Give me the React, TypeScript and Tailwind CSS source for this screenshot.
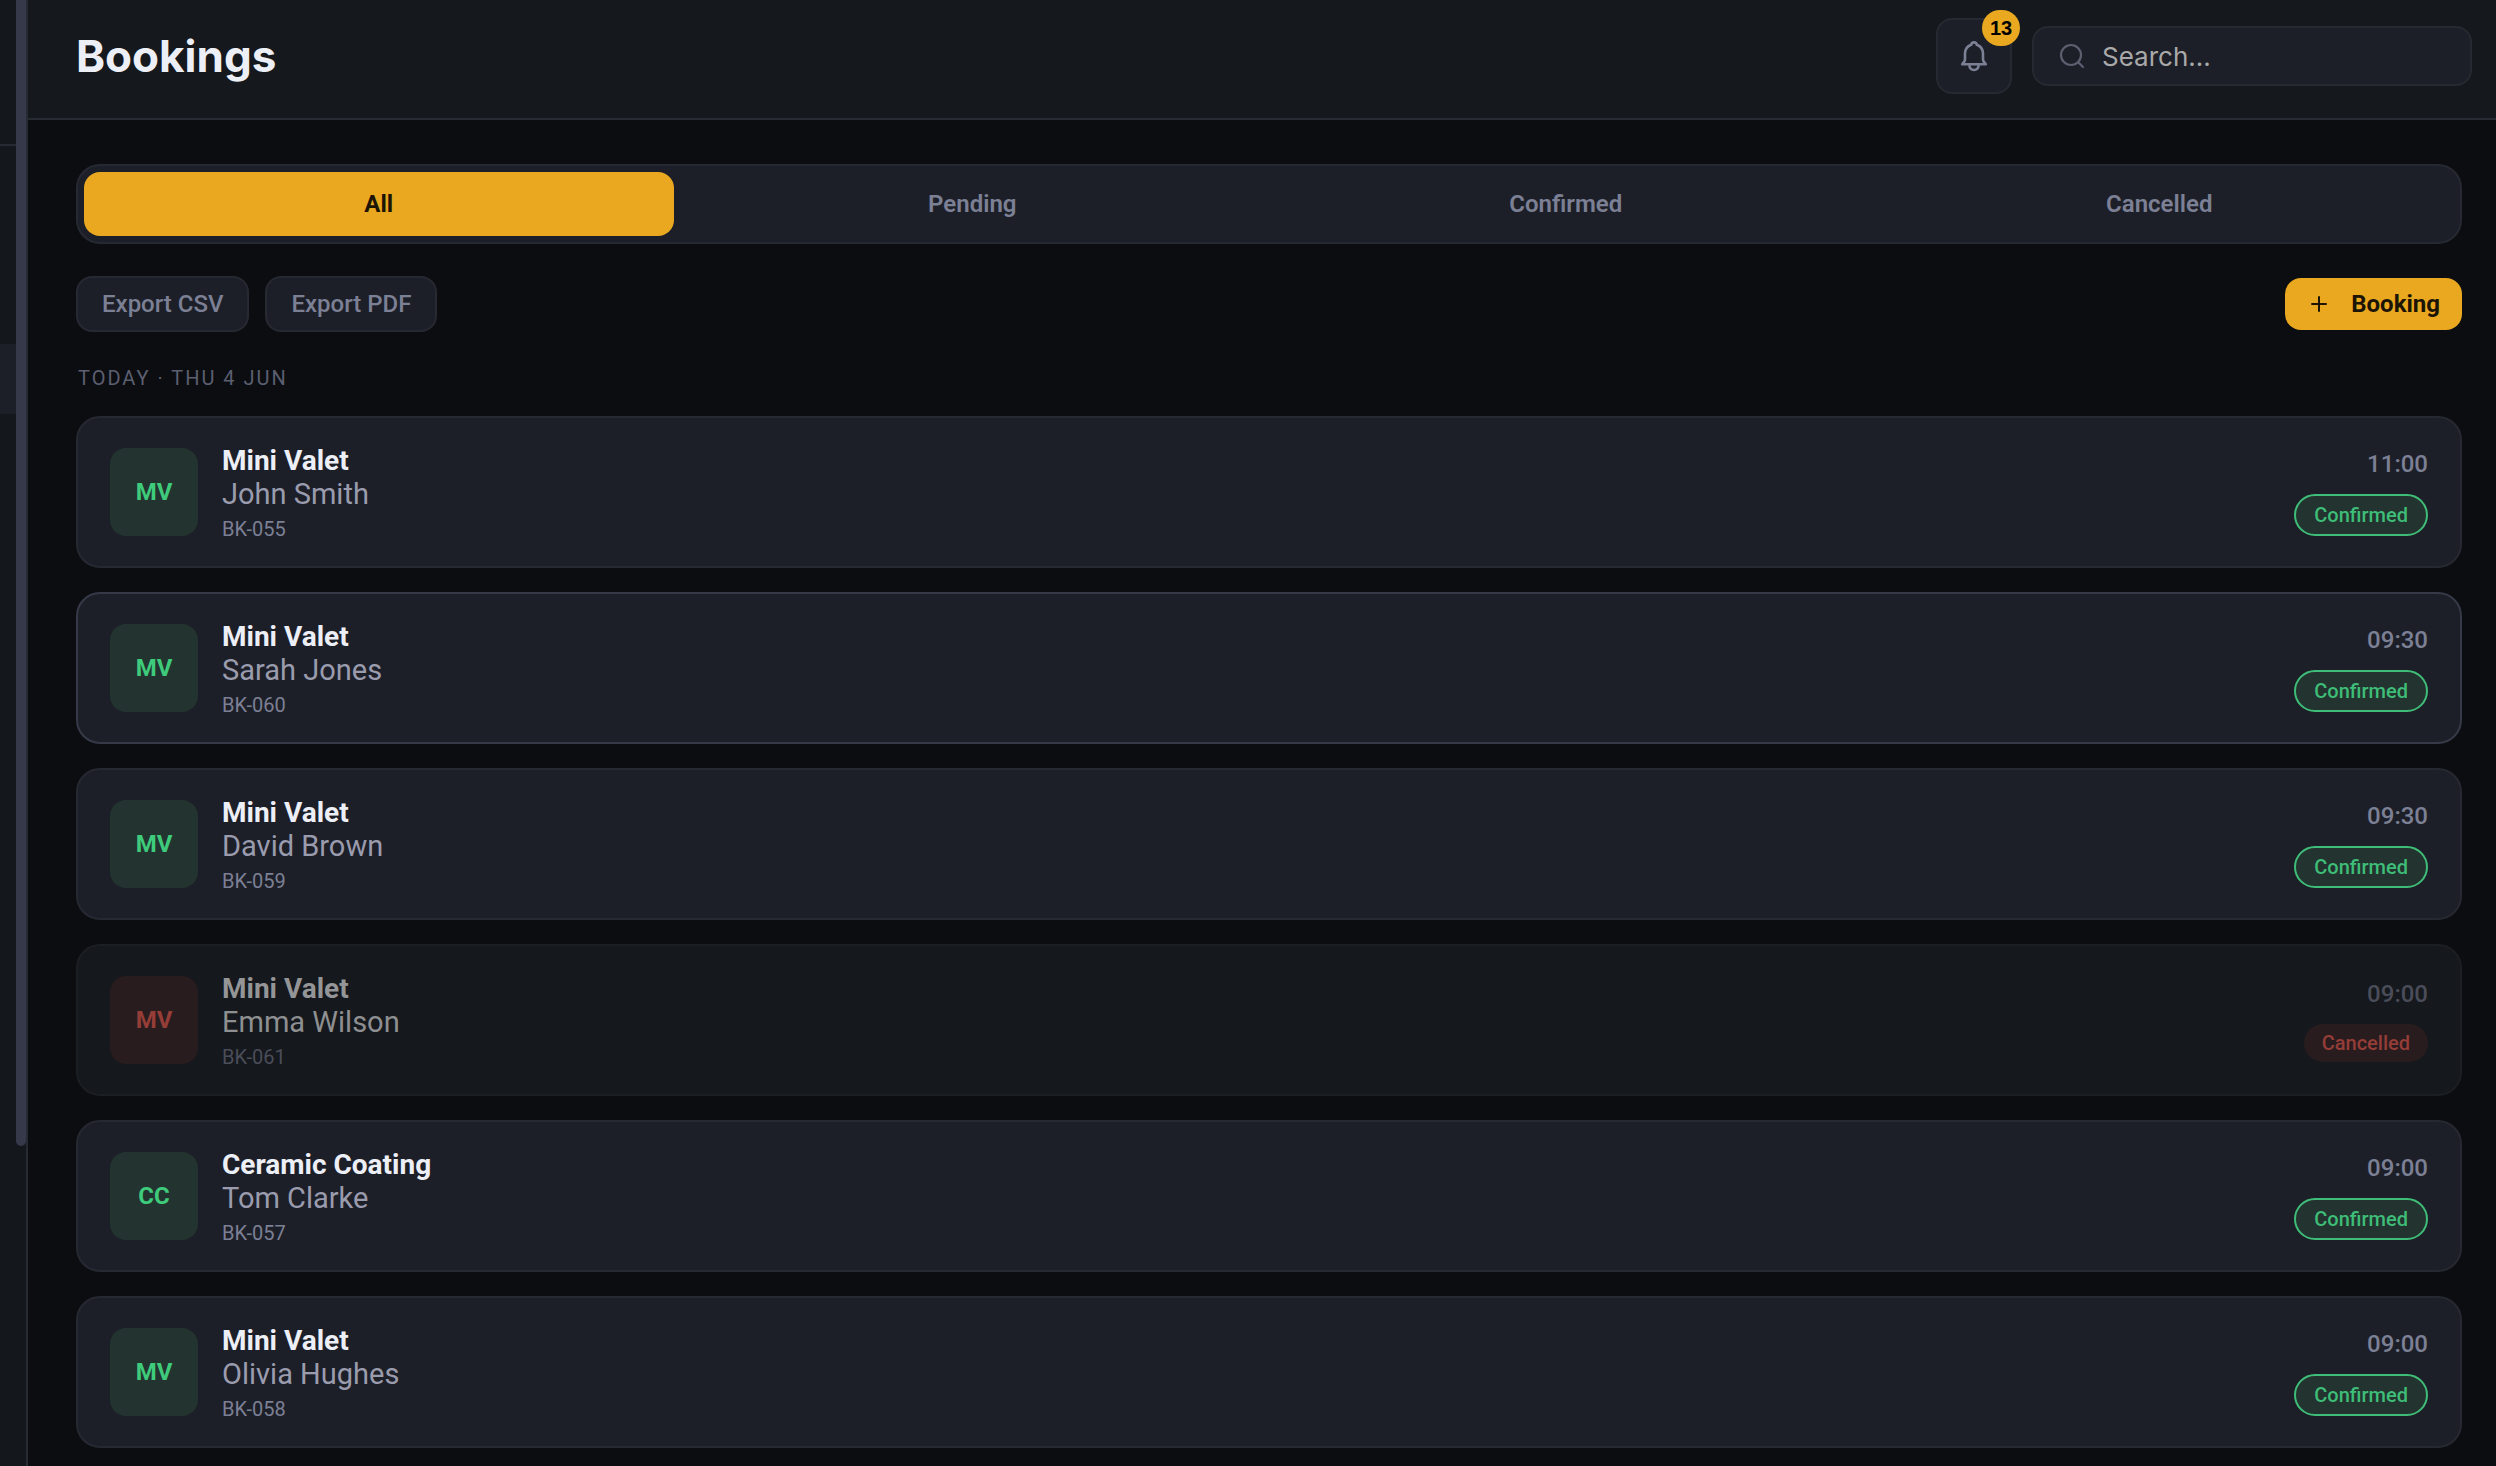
import { Plus } from "lucide-react";
import { clsx } from "clsx";

type Status = "Confirmed" | "Cancelled";

interface Booking {
  id: string;
  service: string;
  initials: string;
  customer: string;
  time: string;
  status: Status;
  highlighted?: boolean;
}

const tabs = ["All", "Pending", "Confirmed", "Cancelled"];

const bookings: Booking[] = [
  { id: "BK-055", service: "Mini Valet", initials: "MV", customer: "John Smith", time: "11:00", status: "Confirmed" },
  { id: "BK-060", service: "Mini Valet", initials: "MV", customer: "Sarah Jones", time: "09:30", status: "Confirmed", highlighted: true },
  { id: "BK-059", service: "Mini Valet", initials: "MV", customer: "David Brown", time: "09:30", status: "Confirmed" },
  { id: "BK-061", service: "Mini Valet", initials: "MV", customer: "Emma Wilson", time: "09:00", status: "Cancelled" },
  { id: "BK-057", service: "Ceramic Coating", initials: "CC", customer: "Tom Clarke", time: "09:00", status: "Confirmed" },
  { id: "BK-058", service: "Mini Valet", initials: "MV", customer: "Olivia Hughes", time: "09:00", status: "Confirmed" },
];

function BellIcon() {
  return (
    <svg viewBox="0 0 32 32" className="size-8" fill="none" stroke="currentColor" strokeWidth="2.6" strokeLinejoin="round" strokeLinecap="round" aria-hidden="true">
      <path d="M13.200 4.800C13.400 3.300 14.500 2.400 16 2.400s2.600.9 2.800 2.400c3.800 1.400 6.200 4.600 6.200 8.800v5.600c0 1.200.4 2 1 2.700l1.800 2.300H4.200L6 21.900c.6-.7 1-1.500 1-2.700v-5.600c0-4.200 2.400-7.400 6.200-8.800Z" />
      <path d="M11.400 25c0 3 1.900 5 4.600 5s4.600-2 4.600-5" />
    </svg>
  );
}

function SearchIcon() {
  return (
    <svg viewBox="0 0 28 28" className="size-7 shrink-0 text-[#5b5f70]" fill="none" stroke="currentColor" strokeWidth="2.2" strokeLinecap="round" aria-hidden="true">
      <circle cx="13" cy="13" r="10" />
      <path d="M20.500 20.500 25 25" />
    </svg>
  );
}

function BookingCard({ booking }: { booking: Booking }) {
  const cancelled = booking.status === "Cancelled";

  return (
    <article
      className={clsx(
        "flex items-center gap-6 rounded-3xl border-2 px-8 py-6",
        cancelled ? "border-[#1b1e23] bg-[#15181c]" : "bg-[#1d1f28]",
        !cancelled && (booking.highlighted ? "border-[#363a48]" : "border-[#262932]"),
      )}
    >
      <div
        className={clsx(
          "flex size-22 shrink-0 items-center justify-center rounded-2xl text-2xl font-bold",
          cancelled ? "bg-[#281c1f] text-[#953d37]" : "bg-[#23332f] text-[#3ecb7c]",
        )}
      >
        {booking.initials}
      </div>

      <div className="min-w-0 flex-1">
        <h2 className={clsx("text-[28px] leading-[38px] font-bold", cancelled ? "text-[#949597]" : "text-[#edeff6]")}>
          {booking.service}
        </h2>
        <p className={clsx("text-[29px] leading-7", cancelled ? "text-[#8e8f91]" : "text-[#9a9cae]")}>{booking.customer}</p>
        <p className={clsx("mt-2 text-xl leading-[26px]", cancelled ? "text-[#4a4d59]" : "text-[#7c8095]")}>{booking.id}</p>
      </div>

      <div className="flex flex-col items-end gap-3.5">
        <time className={clsx("text-2xl leading-8 font-medium", cancelled ? "text-[#4a4d59]" : "text-[#7c8095]")}>{booking.time}</time>
        <span
          className={clsx(
            "rounded-full px-[18px] text-xl leading-[38px] font-medium",
            cancelled ? "bg-[#281c1f] text-[#953d37]" : "border-2 border-[#3ebd78] bg-[#23332f] text-[#3ebd78]",
          )}
        >
          {booking.status}
        </span>
      </div>
    </article>
  );
}

function Sidebar() {
  return (
    <aside className="flex w-7 shrink-0 border-r-2 border-[#262a32] bg-[#14181c]">
      <nav className="w-4" aria-label="Main">
        <div className="h-[146px] border-b-2 border-[#262a32]" />
        <a href="#bookings" aria-label="Bookings" aria-current="page" className="mt-[198px] block h-[70px] bg-[#1d1f28]" />
      </nav>
      <div className="h-[1146px] w-2.5 rounded-b-full bg-[#363949]" />
    </aside>
  );
}

export default function App() {
  return (
    <div className="flex min-h-screen bg-[#0b0d10] font-['Roboto',sans-serif]">
      <Sidebar />

      <div className="min-w-0 flex-1">
        <header className="flex h-30 items-center gap-5 border-b-2 border-[#262a32] bg-[#15181c] pr-6 pb-1.5 pl-12">
          <h1 className="flex-1 font-['Inter',sans-serif] text-[44px] font-bold text-[#edeff6]">Bookings</h1>
          <button
            type="button"
            aria-label="Notifications"
            className="relative flex size-19 items-center justify-center rounded-2xl border-2 border-[#262932] bg-[#1d1f28] text-[#7c8095]"
          >
            <BellIcon />
            <span className="absolute -top-2.5 -right-2.5 flex h-9 w-[38px] items-center justify-center rounded-full bg-[#e9a820] font-['Liberation_Sans',sans-serif] text-xl font-bold text-black">
              13
            </span>
          </button>
          <label className="flex h-15 w-[440px] items-center gap-4 rounded-2xl border-2 border-[#262932] bg-[#1d1f28] px-6">
            <SearchIcon />
            <input
              type="search"
              aria-label="Search"
              placeholder="Search..."
              className="min-w-0 flex-1 bg-transparent font-['Inter',sans-serif] text-[26px] text-[#edeff6] outline-none placeholder:text-[#a9a9a9]"
            />
          </label>
        </header>

        <main className="flex flex-col pt-11 pr-[34px] pb-4 pl-12">
          <div role="tablist" className="flex gap-1 rounded-3xl border-2 border-[#262932] bg-[#1d1f28] p-1.5">
            {tabs.map((tab, i) => (
              <button
                key={tab}
                type="button"
                role="tab"
                aria-selected={i === 0}
                className={clsx(
                  "h-16 flex-1 rounded-2xl text-2xl",
                  i === 0 ? "bg-[#e9a820] font-bold text-[#1c1404]" : "font-semibold text-[#7c8095]",
                )}
              >
                {tab}
              </button>
            ))}
          </div>

          <div className="mt-8 flex items-center justify-between">
            <div className="flex gap-4">
              {["Export CSV", "Export PDF"].map((label) => (
                <button
                  key={label}
                  type="button"
                  className="h-14 rounded-2xl border-2 border-[#262932] bg-[#1d1f28] px-6 text-2xl font-medium text-[#7c8095]"
                >
                  {label}
                </button>
              ))}
            </div>
            <button type="button" className="flex h-13 items-center gap-5 rounded-2xl bg-[#e9a820] px-[22px] text-2xl font-bold text-[#1c1404]">
              <Plus className="size-6" strokeWidth={2} />
              Booking
            </button>
          </div>

          <p className="mt-8 mb-6 pl-0.5 text-xl leading-7 tracking-[2px] text-[#5b5f70]">TODAY · THU 4 JUN</p>

          <div className="flex flex-col gap-6">
            {bookings.map((booking) => (
              <BookingCard key={booking.id} booking={booking} />
            ))}
          </div>
        </main>
      </div>
    </div>
  );
}
